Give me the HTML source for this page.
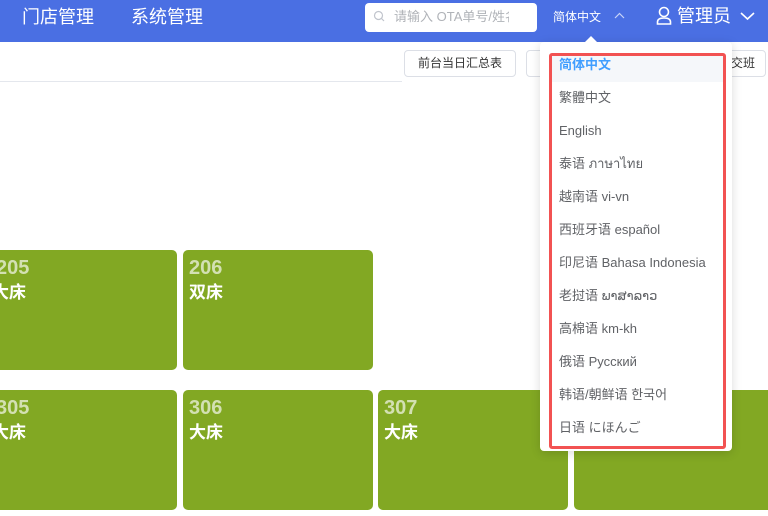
<!DOCTYPE html>
<html><head><meta charset="utf-8"><style>
*{margin:0;padding:0;box-sizing:border-box}
body{width:768px;height:516px;overflow:hidden;background:#fff;font-family:"Liberation Sans","Noto Sans CJK SC",sans-serif;position:relative}
.hdr{position:absolute;left:0;top:0;width:768px;height:42px;background:#4a6fe3}
.abs{position:absolute;white-space:nowrap}
.menu{color:#fff;font-size:18px;top:5px;line-height:24px}
.search{left:365px;top:3px;width:172px;height:29px;background:#fff;border-radius:4px}
.tile{position:absolute;background:#82a823;border-radius:5px;height:120px}
.tile .n{position:absolute;left:6px;top:6px;font-size:20px;line-height:24px;font-weight:bold;color:#d3e0b2}
.tile .t{position:absolute;left:6px;top:32px;font-size:17px;line-height:22px;font-weight:bold;color:#fff}
.btn{position:absolute;top:50px;height:27px;border:1px solid #dcdfe6;border-radius:4px;background:#fff;font-size:12px;color:#333;line-height:25px;text-align:center}
.dd{position:absolute;left:540px;top:42px;width:192px;height:409px;background:#fff;border-radius:4px;box-shadow:0 2px 10px rgba(0,0,0,.15)}
.red{position:absolute;left:549px;top:53px;width:177px;height:396px;border:3px solid #f25252;border-radius:3px}
.it{position:absolute;left:559px;font-size:13px;line-height:16px;height:16px;color:#606266;white-space:nowrap}
</style></head><body>
<div class="hdr"></div>
<div class="abs menu" style="left:22px">门店管理</div>
<div class="abs menu" style="left:131px">系统管理</div>
<div class="abs search"></div>
<svg class="abs" style="left:373px;top:10px" width="12" height="12" viewBox="0 0 12 12"><circle cx="5.5" cy="5.5" r="4" fill="none" stroke="#c0c4cc" stroke-width="1.2"/><path d="M8.5 8.5L11 11" stroke="#c0c4cc" stroke-width="1.2"/></svg>
<div class="abs" style="left:394px;top:9px;font-size:13px;line-height:16px;color:#b0b3b8;width:115px;overflow:hidden">请输入 OTA单号/姓名</div>
<div class="abs" style="left:553px;top:9px;font-size:12px;line-height:16px;color:#fff">简体中文</div>
<svg class="abs" style="left:614px;top:12px" width="11" height="8" viewBox="0 0 11 8"><path d="M1 6L5.5 1.5L10 6" fill="none" stroke="#c8d4f8" stroke-width="1.2"/></svg>
<svg class="abs" style="left:656px;top:6px" width="16" height="19" viewBox="0 0 16 19"><circle cx="8" cy="6" r="4.5" fill="none" stroke="#fff" stroke-width="1.6"/><path d="M1.5 18V16Q1.5 12 8 12Q14.5 12 14.5 16V18Z" fill="none" stroke="#fff" stroke-width="1.6"/></svg>
<div class="abs" style="left:677px;top:4px;font-size:18px;line-height:24px;color:#fff">管理员</div>
<svg class="abs" style="left:740px;top:11px" width="15" height="10" viewBox="0 0 15 10"><path d="M1 2L7.5 8L14 2" fill="none" stroke="#fff" stroke-width="1.6"/></svg>
<div class="abs" style="left:0;top:81px;width:402px;height:1px;background:#e4e7ed"></div>
<div class="btn" style="left:404px;width:112px">前台当日汇总表</div>
<div class="btn" style="left:526px;width:120px"></div>
<div class="btn" style="left:700px;width:66px;text-align:right;padding-right:10px">交班</div>
<div class="tile" style="left:-20px;top:250px;width:197px"><div class="n" style="left:16px">205</div><div class="t" style="left:12px">大床</div></div>
<div class="tile" style="left:183px;top:250px;width:190px"><div class="n">206</div><div class="t">双床</div></div>
<div class="tile" style="left:-20px;top:390px;width:197px"><div class="n" style="left:16px">305</div><div class="t" style="left:12px">大床</div></div>
<div class="tile" style="left:183px;top:390px;width:190px"><div class="n">306</div><div class="t">大床</div></div>
<div class="tile" style="left:378px;top:390px;width:190px"><div class="n">307</div><div class="t">大床</div></div>
<div class="tile" style="left:574px;top:390px;width:200px"></div>
<div class="dd"></div>
<svg class="abs" style="left:584px;top:36px" width="14" height="7" viewBox="0 0 14 7"><path d="M0 7L7 0L14 7Z" fill="#fff"/></svg>
<div class="abs" style="left:552px;top:56px;width:171px;height:26px;background:#f5f7fa"></div>
<div class="red"></div>
<div class="it" style="top:57px;color:#409eff;font-weight:bold">简体中文</div>
<div class="it" style="top:90px">繁體中文</div>
<div class="it" style="top:123px">English</div>
<div class="it" style="top:156px">泰语 ภาษาไทย</div>
<div class="it" style="top:189px">越南语 vi-vn</div>
<div class="it" style="top:222px">西班牙语 español</div>
<div class="it" style="top:255px">印尼语 Bahasa Indonesia</div>
<div class="it" style="top:288px">老挝语 ພາສາລາວ</div>
<div class="it" style="top:321px">高棉语 km-kh</div>
<div class="it" style="top:354px">俄语 Русский</div>
<div class="it" style="top:387px">韩语/朝鲜语 한국어</div>
<div class="it" style="top:420px">日语 にほんご</div>
</body></html>
